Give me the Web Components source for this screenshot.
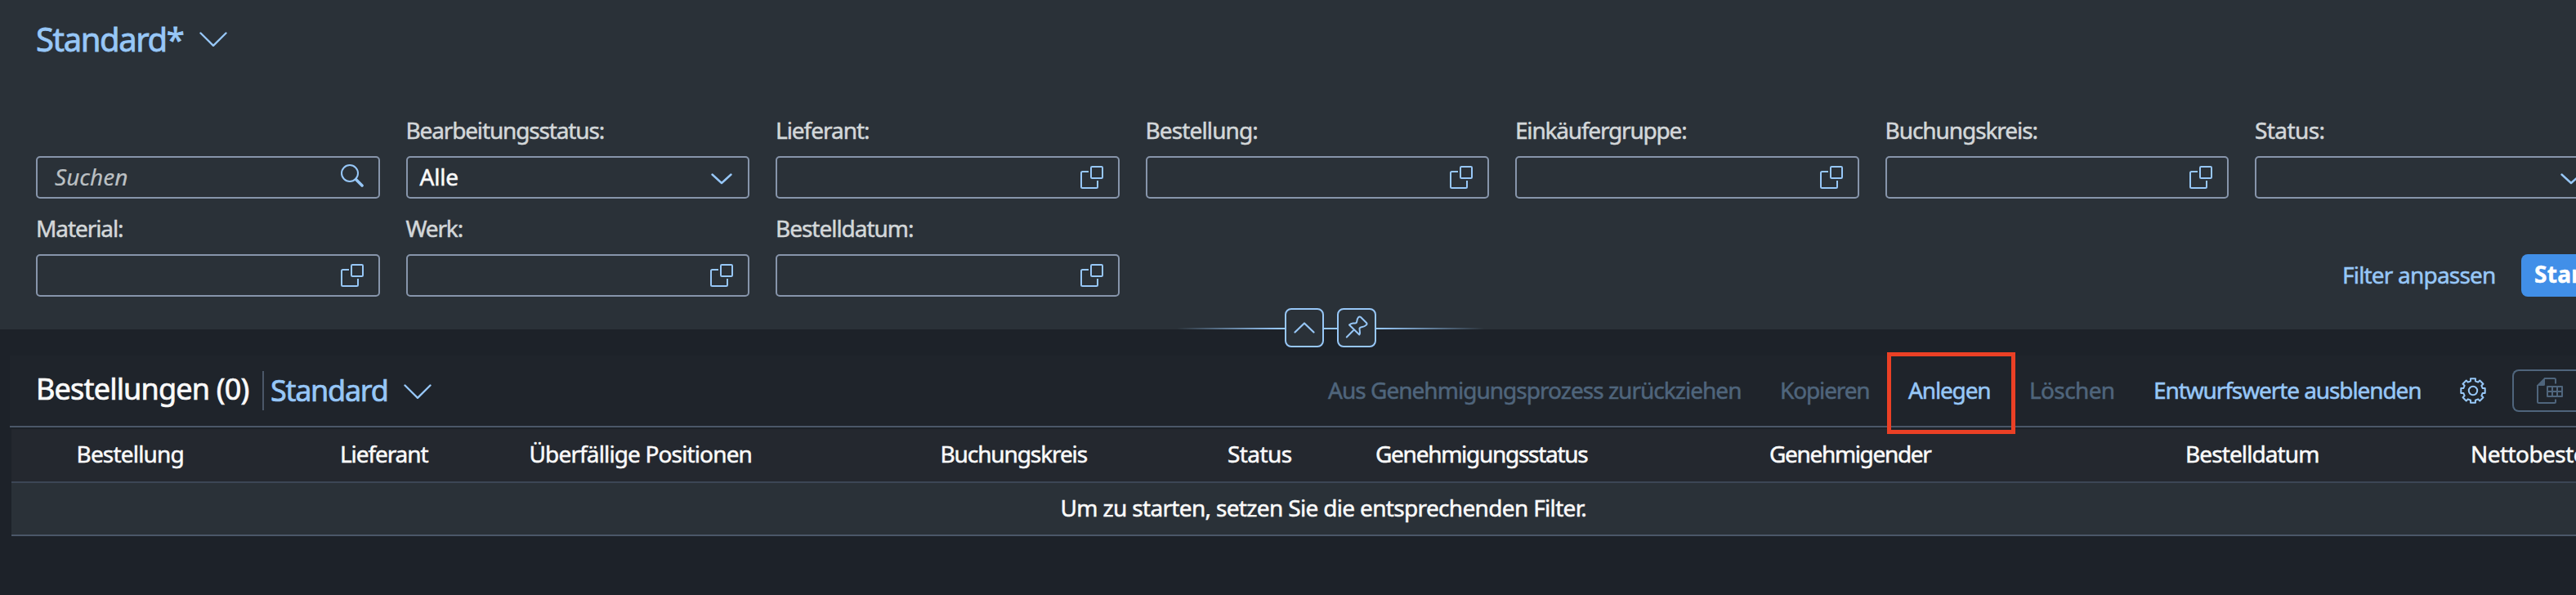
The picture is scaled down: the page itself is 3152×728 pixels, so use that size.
<!DOCTYPE html>
<html lang="de">
<head>
<meta charset="utf-8">
<title>Bestellungen</title>
<style>
html,body{margin:0;height:100%;overflow:hidden;background:#1d2229}
body{font-family:"Noto Sans","Open Sans",Roboto,sans-serif;font-size:28px;color:#fafafa;
--accent:#97c7f7;--line:#4b5768;--field:#8795ab;--panel:#2a3138;--muted:#4f657c}
</style>
</head>
<body>
<orders-page></orders-page>
<script>
const define=(name,html,init)=>{
  const t=document.createElement('template');t.innerHTML=html;
  customElements.define(name,class extends HTMLElement{
    constructor(){super();this.attachShadow({mode:'open'}).append(t.content.cloneNode(true));}
    connectedCallback(){if(init)init.call(this,this.shadowRoot);}
  });
};

/* Text run spaced out to an advance width given in pixels. */
define('ui-text',`<style>:host{display:block;white-space:nowrap;flex:none}span{display:inline-block;transform:translateY(-.045em)}</style><span><slot></slot></span>`,function(r){
  const w=+this.getAttribute('fit'),s=r.querySelector('span');
  if(!w)return;
  this.style.width=w+'px';
  const n=this.textContent.length;
  s.style.letterSpacing=((w-1.5-s.getBoundingClientRect().width)/n)+'px';
});

const gear=(()=>{
  const p=[],at=(r,d)=>{const a=d*Math.PI/180;return (16+r*Math.cos(a)).toFixed(2)+' '+(16+r*Math.sin(a)).toFixed(2)};
  for(let k=0;k<8;k++){const a=k*45;p.push(at(12.1,a-14),at(15,a-11.5),at(15,a+11.5),at(12.1,a+14));}
  return 'M'+p.join('L')+'Z';
})();
const icons={
  down:[34,19,'<path d="M1.5 1.5 17 16.8 32.5 1.5" stroke-width="2.4"/>'],
  chevron:[26,14,'<path d="M1.5 1.5 13 12 24.500 1.500" stroke-width="2.4"/>'],
  up:[26,14,'<path d="M1.500 12.500 13 1.500 24.500 12.500" stroke-width="2.2"/>'],
  search:[28,28,'<circle cx="11" cy="11" r="10" stroke-width="2"/><path d="M18.500 18.500 26 26" stroke-width="3.6"/>'],
  help:[28,28,'<rect x="13" y="1" width="14" height="14" rx="1.2" stroke-width="2"/><path d="M10 7H2.500Q1 7 1 8.500V25.500Q1 27 2.500 27H19.500Q21 27 21 25.500V18" stroke-width="2" stroke-linecap="butt"/>'],
  pin:[48,48,'<path d="M26.200 11.200Q27.500 9.800 29 11L36 18Q37.200 19.400 35.800 20.600Q34 22.400 30 23.200Q27 24 27.500 25.500L28 30Q28 32 27.300 32.500L15 20.500Q17 18.500 19.500 18.400L22 18.500Q24 18.500 24.200 16.500Q24.600 13 26.200 11.200ZM20.500 26.800 11.800 35.500" stroke-width="2"/>'],
  gear:[32,32,`<path d="${gear}" stroke-width="2"/><circle cx="16" cy="16" r="5.200" stroke-width="2"/>`],
  sheet:[32,32,'<path d="M9 1H21.500Q23 1 23 2.500V7.500M1 9V29.500Q1 31 2.500 31H21.500Q23 31 23 29.500V26.500" stroke-width="2" stroke-linecap="butt"/><path d="M0 9.500 9.500 0H10V8.500Q10 10 8.500 10H0Z" fill="currentColor" stroke="none"/><path d="M13 11H31V23H13ZM19 11V23M25 11V23M13 17H31" stroke-width="2"/>']
};
define('ui-icon',`<style>:host{display:block;flex:none;line-height:0}svg{display:block;fill:none;stroke:currentColor;stroke-linecap:round;stroke-linejoin:round}</style>`,function(r){
  const [w,h,d]=icons[this.getAttribute('name')];
  r.innerHTML+=`<svg width="${w}" height="${h}" viewBox="0 0 ${w} ${h}">${d}</svg>`;
});

define('filter-field',`<style>
:host{display:flex;flex-direction:column;gap:11px;-webkit-text-stroke:.5px currentColor}
.label{height:40px;line-height:40px;color:#d3d7d9}
.box{box-sizing:border-box;height:52px;border:2px solid var(--field);border-radius:5px;display:flex;align-items:center;justify-content:space-between;padding:0 18px 0 14px;line-height:47px;color:#fafafa}
:host([kind=search]) .box{padding-left:21px;color:#bcc0c3;font-style:italic;-webkit-text-stroke:.2px currentColor}
:host([kind=chevron]) .box{padding:0 19px 0 15px}
ui-icon{color:var(--accent);margin-left:auto}
:host([kind=search]) ui-icon{margin-bottom:4px}
:host([kind=chevron]) ui-icon{margin-top:3px}
</style><div class="label"><slot name="label"></slot></div><div class="box"><slot></slot></div>`,function(r){
  const i=document.createElement('ui-icon');
  i.setAttribute('name',this.getAttribute('kind')||'help');
  r.querySelector('.box').append(i);
});

define('action-button',`<style>
:host{display:block;color:var(--accent);line-height:51px;flex:none;-webkit-text-stroke:.5px currentColor}
:host([disabled]){color:var(--muted)}
:host([primary]){box-sizing:border-box;background:#418fe8;color:#fff;font-weight:700;border-radius:8px;height:52px;padding-left:16px;width:94.500px}
</style><slot></slot>`);

define('filter-panel',`<style>
:host{display:block;height:403px;background:var(--panel);position:relative}
.title{display:flex;align-items:center;padding:20px 0 0 44px;height:60px;line-height:60px;font-size:40px;color:var(--accent)}
.title ui-icon{margin:-4px 0 0 18px}
.title ui-text{-webkit-text-stroke:.8px currentColor}
.grid{display:grid;grid-template-columns:repeat(7,420.500px);column-gap:32px;row-gap:17px;padding:60px 0 0 44px}
.actions{grid-column:6/8;display:flex;justify-content:flex-end;align-items:flex-end;gap:30px}
.toggles{position:absolute;left:1440px;top:377px;width:376px;height:48px;display:flex;align-items:center;justify-content:center;gap:16px;
background:linear-gradient(90deg,transparent,var(--accent) 33%,var(--accent) 66%,transparent) 0 24px/100% 2px no-repeat}
.toggles div{box-sizing:border-box;width:48px;height:48px;border:2px solid var(--accent);border-radius:8px;background:var(--panel);display:flex;align-items:center;justify-content:center;color:var(--accent)}
</style>
<div class="title"><ui-text fit="182">Standard*</ui-text><ui-icon name="down"></ui-icon></div>
<div class="grid">
<filter-field kind="search"><ui-text fit="91">Suchen</ui-text></filter-field>
<filter-field kind="chevron"><ui-text slot="label" fit="244">Bearbeitungsstatus:</ui-text><ui-text fit="49">Alle</ui-text></filter-field>
<filter-field><ui-text slot="label" fit="116">Lieferant:</ui-text></filter-field>
<filter-field><ui-text slot="label" fit="139">Bestellung:</ui-text></filter-field>
<filter-field><ui-text slot="label" fit="211">Einkäufergruppe:</ui-text></filter-field>
<filter-field><ui-text slot="label" fit="188">Buchungskreis:</ui-text></filter-field>
<filter-field kind="chevron"><ui-text slot="label" fit="87">Status:</ui-text></filter-field>
<filter-field><ui-text slot="label" fit="108">Material:</ui-text></filter-field>
<filter-field><ui-text slot="label" fit="71">Werk:</ui-text></filter-field>
<filter-field><ui-text slot="label" fit="170">Bestelldatum:</ui-text></filter-field>
<div class="actions"><action-button><ui-text fit="189">Filter anpassen</ui-text></action-button><action-button primary><ui-text fit="72">Start</ui-text></action-button></div>
</div>
<div class="toggles"><div><ui-icon name="up"></ui-icon></div><div><ui-icon name="pin"></ui-icon></div></div>`);

define('table-toolbar',`<style>
:host{display:flex;align-items:center;height:86px;padding-left:32px;background:#1f242b;border-bottom:2px solid var(--line)}
.h{font-size:36px;line-height:50px;-webkit-text-stroke:.7px currentColor}
.sep{width:2px;height:48px;background:var(--line);margin:0 8px 0 15px}
.v{color:var(--accent);padding-top:3px}
.arrow{color:var(--accent);margin:3px 0 0 18px}
.right{margin-left:auto;display:flex;align-items:center;gap:46px}
.mark{position:relative}
.mark::after{content:"";position:absolute;left:-26px;top:-22px;width:147px;height:90px;border:5px solid #eb4025}
.gear{color:var(--accent)}
.export{box-sizing:border-box;width:78px;height:52px;border:2px solid var(--muted);border-right:0;border-radius:8px 0 0 8px;padding:8px 0 0 28px;color:var(--muted);margin-left:-14px}
</style>
<ui-text class="h" fit="262">Bestellungen (0)</ui-text><div class="sep"></div><ui-text class="h v" fit="145">Standard</ui-text><ui-icon class="arrow" name="down"></ui-icon>
<div class="right">
<action-button disabled><ui-text fit="507">Aus Genehmigungsprozess zurückziehen</ui-text></action-button>
<action-button disabled><ui-text fit="111">Kopieren</ui-text></action-button>
<action-button class="mark"><ui-text fit="102">Anlegen</ui-text></action-button>
<action-button disabled><ui-text fit="106">Löschen</ui-text></action-button>
<action-button><ui-text fit="329">Entwurfswerte ausblenden</ui-text></action-button>
<ui-icon class="gear" name="gear"></ui-icon>
<div class="export"><ui-icon name="sheet"></ui-icon></div>
</div>`);

define('orders-table',`<style>
:host{display:block;margin:2px 0 0 2px}
.head{display:grid;grid-template-columns:322.500px 231.500px 503px 351.500px 181px 482px 509px 349px 1fr;padding-left:79.500px;height:64px;line-height:63px;background:#24282f;border-bottom:2px solid #3c4655;overflow:hidden}
.head,.msg{-webkit-text-stroke:.5px currentColor}
.msg{height:63px;line-height:62px;background:var(--panel);border-bottom:2px solid var(--line);display:flex;padding-left:1283.500px}
</style>
<div class="head">
<ui-text fit="133">Bestellung</ui-text><ui-text fit="109">Lieferant</ui-text><ui-text fit="274">Überfällige Positionen</ui-text><ui-text fit="181">Buchungskreis</ui-text><ui-text fit="80">Status</ui-text><ui-text fit="261">Genehmigungsstatus</ui-text><ui-text fit="199">Genehmigender</ui-text><ui-text fit="165">Bestelldatum</ui-text><ui-text fit="213">Nettobestellwert</ui-text>
</div>
<div class="msg"><ui-text fit="645">Um zu starten, setzen Sie die entsprechenden Filter.</ui-text></div>`);

define('orders-page',`<style>:host{display:block;height:728px;overflow:hidden}main{padding:32px 0 0 12px}</style>
<filter-panel></filter-panel><main><table-toolbar></table-toolbar><orders-table></orders-table></main>`);
</script>
</body>
</html>
